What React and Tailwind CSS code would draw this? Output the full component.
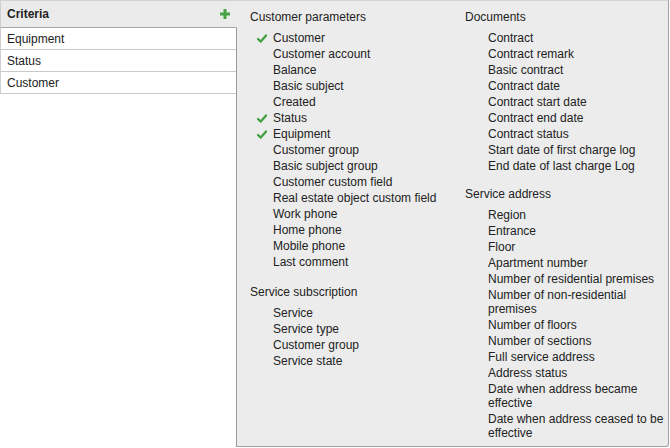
import React from "react";

const font = { fontFamily: '"Liberation Sans", Arial, Helvetica, sans-serif' };

function Check() {
  return (
    <svg width="10" height="9" viewBox="0 0 10 9" className="absolute left-[7px] top-[4px]">
      <path d="M1 5 L3.8 7.6 L9 1.4" fill="none" stroke="#44a142" strokeWidth="2.3" strokeLinecap="round" strokeLinejoin="round" />
    </svg>
  );
}

function Item({ label, checked }) {
  return (
    <li className="relative pl-[23px] py-px leading-[14px]">
      {checked && <Check />}
      {label}
    </li>
  );
}

function Section({ title, items, className = "" }) {
  return (
    <div className={className}>
      <div className="leading-[16px] mb-[5px]">{title}</div>
      <ul>
        {items.map((it) => (
          <Item key={it.label} label={it.label} checked={it.checked} />
        ))}
      </ul>
    </div>
  );
}

const customerParams = [
  { label: "Customer", checked: true },
  { label: "Customer account" },
  { label: "Balance" },
  { label: "Basic subject" },
  { label: "Created" },
  { label: "Status", checked: true },
  { label: "Equipment", checked: true },
  { label: "Customer group" },
  { label: "Basic subject group" },
  { label: "Customer custom field" },
  { label: "Real estate object custom field" },
  { label: "Work phone" },
  { label: "Home phone" },
  { label: "Mobile phone" },
  { label: "Last comment" },
];

const serviceSub = [
  { label: "Service" },
  { label: "Service type" },
  { label: "Customer group" },
  { label: "Service state" },
];

const documents = [
  { label: "Contract" },
  { label: "Contract remark" },
  { label: "Basic contract" },
  { label: "Contract date" },
  { label: "Contract start date" },
  { label: "Contract end date" },
  { label: "Contract status" },
  { label: "Start date of first charge log" },
  { label: "End date of last charge Log" },
];

const serviceAddress = [
  { label: "Region" },
  { label: "Entrance" },
  { label: "Floor" },
  { label: "Apartment number" },
  { label: "Number of residential premises" },
  { label: "Number of non-residential premises" },
  { label: "Number of floors" },
  { label: "Number of sections" },
  { label: "Full service address" },
  { label: "Address status" },
  { label: "Date when address became effective" },
  { label: "Date when address ceased to be effective" },
];

export default function App() {
  return (
    <div style={font} className="w-[670px] h-[448px] bg-white text-[12px] text-[#222] flex overflow-hidden">
      <div className="w-[237px] flex flex-col">
        <div className="h-[28px] bg-[#ebebeb] border-t border-l border-b border-t-[#d4d4d4] border-l-[#cfcfcf] border-b-[#a8a8a8] flex items-center justify-between pl-[6px] pr-[7px]">
          <span className="font-bold">Criteria</span>
          <svg width="10" height="10" viewBox="0 0 10 10">
            <rect x="3.5" y="0" width="3" height="10" fill="#45a243" />
            <rect x="0" y="3.5" width="10" height="3" fill="#45a243" />
          </svg>
        </div>
        <div className="h-[419px] border-r border-[#9a9a9a]">
          {["Equipment", "Status", "Customer"].map((r) => (
            <div key={r} className="h-[22px] flex items-center pl-[6px] border-b border-l border-b-[#c9c9c9] border-l-[#cfcfcf] bg-white">
              {r}
            </div>
          ))}
        </div>
      </div>
      <div className="w-[432px] h-[447px] bg-[#ececec] border-t border-r border-b border-t-[#d4d4d4] border-r-[#a0a0a0] border-b-[#a0a0a0] rounded-br-[3px] flex pt-[8px] pl-[13px]">
        <div className="w-[215px]">
          <Section title="Customer parameters" items={customerParams} />
          <Section title="Service subscription" items={serviceSub} className="mt-[14px]" />
        </div>
        <div className="w-[202px]">
          <Section title="Documents" items={documents} />
          <Section title="Service address" items={serviceAddress} className="mt-[12px]" />
        </div>
      </div>
    </div>
  );
}
